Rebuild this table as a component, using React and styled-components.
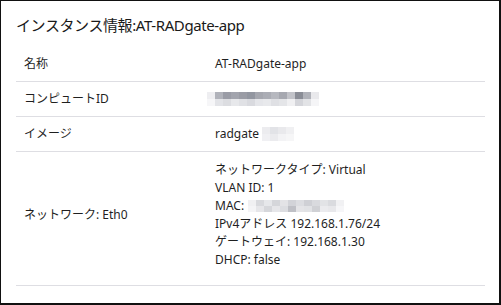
import React from 'react';
import styled, {createGlobalStyle} from 'styled-components';

const GlobalStyle = createGlobalStyle`
html, body {
  margin: 0;
  padding: 0;
  background: #ffffff;
}

body {
  font-family: "Noto Sans", "Noto Sans CJK JP", sans-serif;
  color: #1f1f1f;
}
`;

const Card = styled.section`
  box-sizing: border-box;
  width: 501px;
  height: 305px;
  border-style: solid;
  border-color: #111;
  border-width: 1px 2px 2px 1px;
  padding: 14px 14px 0 15px;
  background: #fff;
`;

const Title = styled.h2`
  margin: 0 0 12px 0;
  font-size: 15px;
  line-height: 20px;
  font-weight: 400;
  color: #1a1a1a;
  letter-spacing: -0.4px;
`;

const Table = styled.div`
  display: grid;
  grid-template-columns: 191px 1fr;
`;

const Row = styled.div`
  display: contents;
`;

const Cell = styled.div`
  display: flex;
  align-items: center;
  padding: 8px 8px;
  font-size: 12px;
  line-height: 18px;
  border-bottom: 1px solid #dedee3;
  padding-bottom: ${p => (p.$tall ? '16px' : '8px')};
  padding-top: ${p => (p.$tall ? '9px' : '8px')};
`;

const Lines = styled.div`
  display: flex;
  flex-direction: column;
`;

const Line = styled.span`
  display: flex;
  align-items: center;
  white-space: nowrap;
`;

const Mosaic = styled.span`
  display: inline-grid;
  grid-auto-flow: column;
  grid-template-rows: repeat(${p => p.$rows}, ${p => p.$cell}px);
  grid-auto-columns: 8px;
  margin-left: ${p => p.$gap}px;
  vertical-align: middle;
`;

const Px = styled.i`
  display: block;
`;

// pixelated redaction: each column is [top, bottom] shade
const idShades = [
  ['#eeeef1', '#f6f6f8'], ['#b0b2ba', '#e3e4e8'], ['#9a9ca6', '#dcdde1'], ['#a2a4ad', '#e7e8eb'],
  ['#9a9ca5', '#e0e1e5'], ['#9296a0', '#d9dadf'], ['#a5a7af', '#e5e6ea'], ['#abadb5', '#e8e9ec'],
  ['#b6b8bf', '#dfe0e4'], ['#a6a8b0', '#e4e5e8'], ['#c2c3c9', '#f0f0f2'], ['#8a8d96', '#d4d5da'],
  ['#b0b2b9', '#e2e3e6'], ['#e9e9ec', '#f5f5f7'],
];

const imgShades = [
  ['#ececef', '#f0f0f3'], ['#e2e3e7', '#ebebee'], ['#e9e9ec', '#f3f3f5'], ['#f0f0f2', '#f6f6f7'],
];

const macShades = [
  ['#f0f0f2', '#f4f4f6'], ['#d8d9dd', '#e6e6e9'], ['#e6e7ea', '#d6d7db'], ['#d5d6da', '#e6e6e9'],
  ['#e3e3e6', '#dcdde1'], ['#d2d3d8', '#bfc0c6'], ['#dcdde1', '#e4e4e7'], ['#cfd0d5', '#e1e2e5'],
  ['#d9dade', '#d0d1d5'], ['#e2e3e6', '#ebebee'], ['#dadbdf', '#e8e8eb'], ['#f1f1f3', '#f6f6f8'],
];

const Redacted = ({shades, cell = 7, gap = 0}) => (
  <Mosaic $rows={2} $cell={cell} $gap={gap}>
    {shades.flatMap((col, i) =>
      col.map((c, j) => <Px key={i + '-' + j} style={{background: c}} />)
    )}
  </Mosaic>
);

const network = [
  <>ネットワークタイプ: Virtual</>,
  <>VLAN ID: 1</>,
  <>MAC:<Redacted shades={macShades} cell={6} gap={4} /></>,
  <>IPv4アドレス 192.168.1.76/24</>,
  <>ゲートウェイ: 192.168.1.30</>,
  <>DHCP: false</>,
];

const App = () => (
  <>
    <GlobalStyle />
    <Card>
      <Title>インスタンス情報:AT-RADgate-app</Title>
      <Table>
        <Row>
          <Cell>名称</Cell>
          <Cell>AT-RADgate-app</Cell>
        </Row>
        <Row>
          <Cell>コンピュートID</Cell>
          <Cell><Redacted shades={idShades} cell={7} gap={-8} /></Cell>
        </Row>
        <Row>
          <Cell>イメージ</Cell>
          <Cell>radgate<Redacted shades={imgShades} cell={7} gap={3} /></Cell>
        </Row>
        <Row>
          <Cell $tall>ネットワーク: Eth0</Cell>
          <Cell $tall>
            <Lines>
              {network.map((n, i) => <Line key={i}>{n}</Line>)}
            </Lines>
          </Cell>
        </Row>
      </Table>
    </Card>
  </>
);

export default App;
